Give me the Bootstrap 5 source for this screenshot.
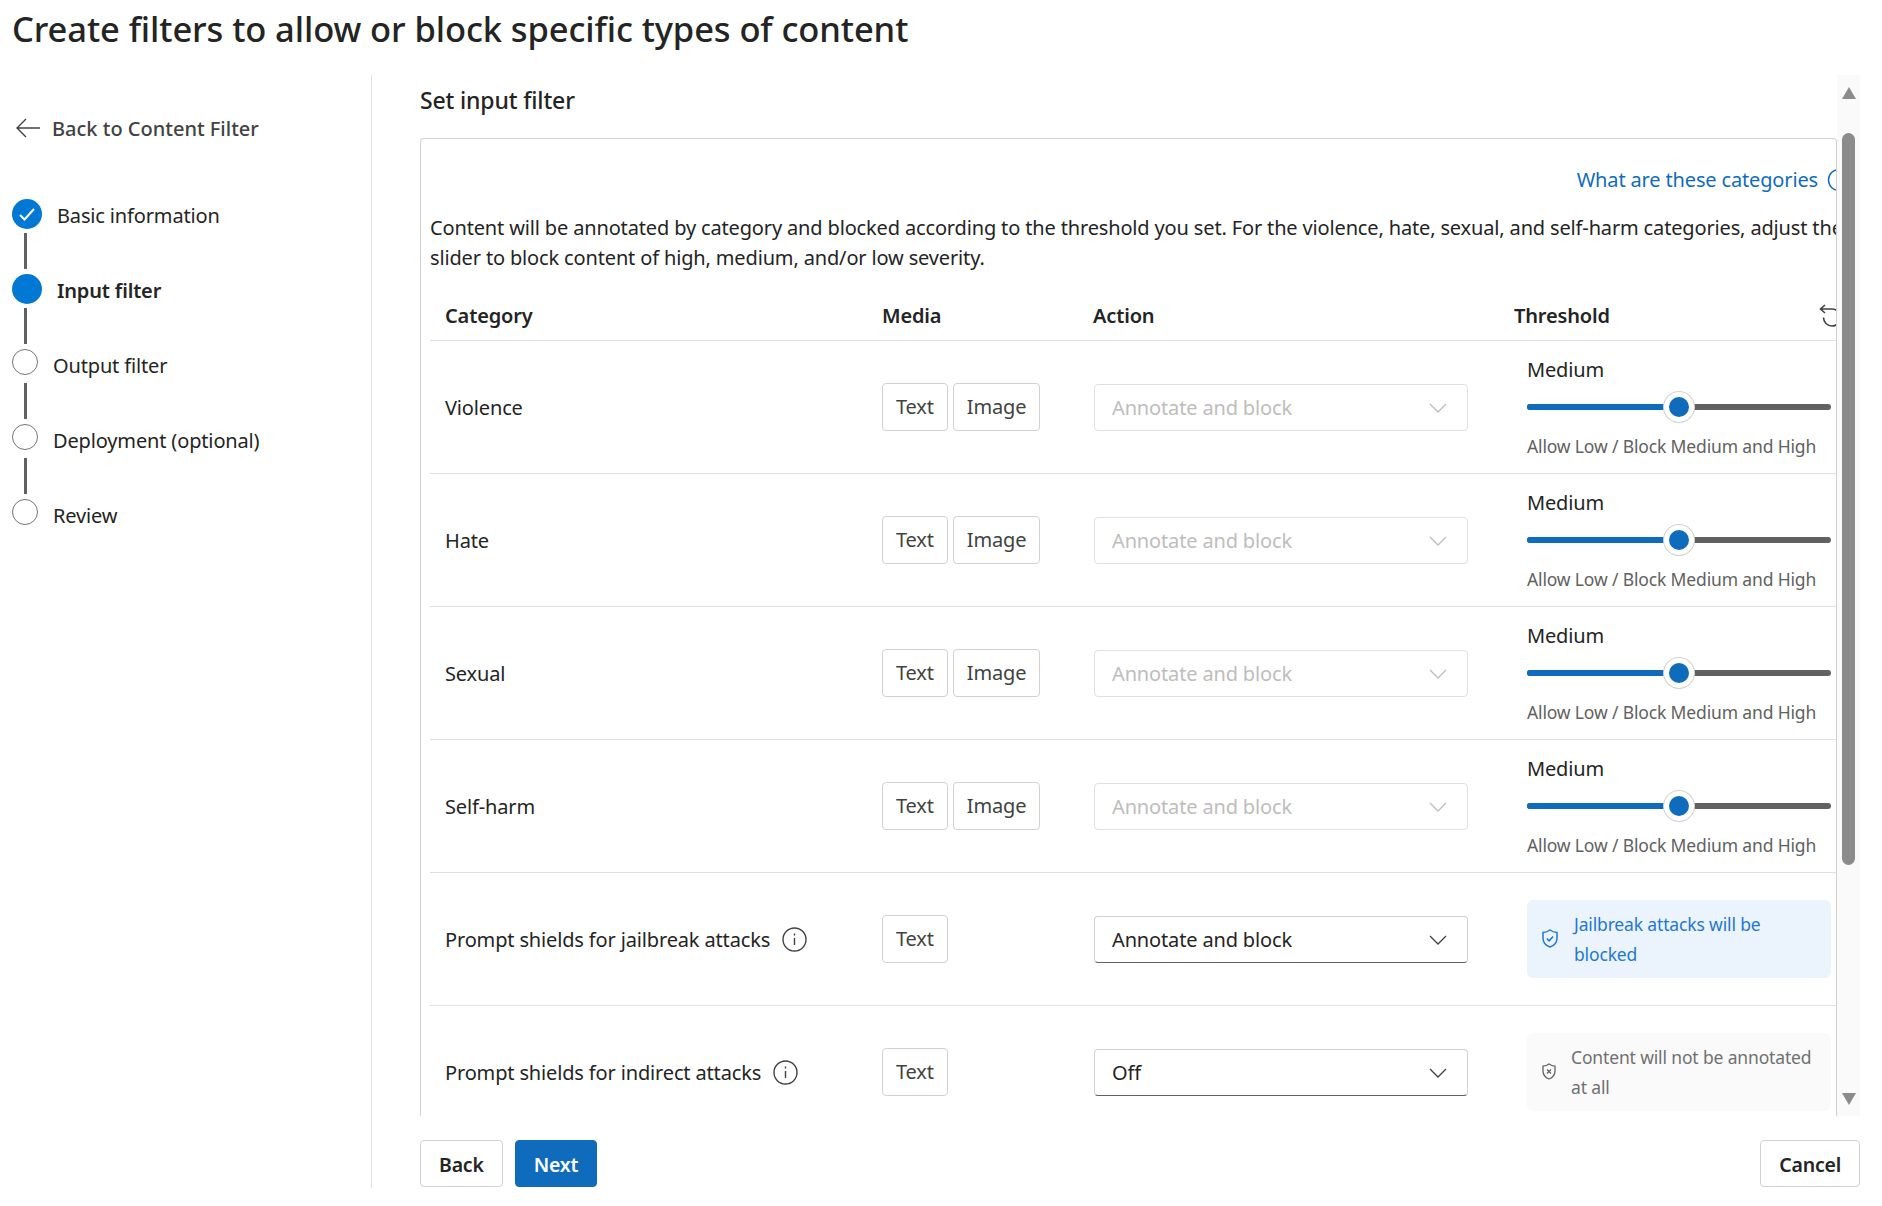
<!DOCTYPE html>
<html lang="en">
<head>
  <meta charset="UTF-8" />
  <meta name="viewport" content="width=device-width, initial-scale=1.0" />
  <title>Create filters</title>
  <link href="https://cdn.jsdelivr.net/npm/bootstrap@5.3.2/dist/css/bootstrap.min.css" rel="stylesheet" />
  <style>
    html, body { height: 100%; overflow: hidden; }
    body { font-family: "Noto Sans", "Open Sans", sans-serif; font-size: 20px; line-height: 30px; color: #242424; letter-spacing: -0.15px; background: #fff; }
    .page-title { font-size: 34.5px; font-weight: 500; line-height: 46px; margin: 6px 0 23px 12px; color: #242424; letter-spacing: -0.1px; }
    .wizard-body { height: 1113px; }
    .side-col { width: 372px; flex: none; border-right: 1px solid #e0e0e0; padding-left: 12px; }
    .back-link { margin: 38px 0 56px 4px; height: 30px; color: #424242; font-weight: 500; gap: 12px; letter-spacing: 0; }
    .back-link span { padding-top: 2px; }
    .step-row { height: 30px; gap: 15px; }
    .step-row span:last-child { padding-top: 3px; }
    .step-dot { flex: none; align-self: flex-start; width: 26px; height: 26px; border: 1px solid #757575; border-radius: 50%; }
    .step-dot.on { width: 30px; height: 30px; border: 0; background: #0078d4; }
    .step-line { width: 3px; height: 36px; margin: 4px 0 5px 12px; background: #616161; }
    .main-col { flex: 1; padding-left: 48px; padding-right: 22px; min-width: 0; }
    .scroll-area { height: 1041px; }
    .scroll-body { flex: 1; min-width: 0; }
    .set-title { font-size: 23px; font-weight: 500; margin: 10px 0 23px; }
    .filter-panel { height: 978px; border: 1px solid #d1d1d1; border-bottom: 0; border-radius: 4px 4px 0 0; padding-left: 9px; overflow: hidden; }
    .cat-link { height: 30px; margin: 26px -15px 18px 0; color: #0f6cbd; gap: 9px; }
    .filter-note { white-space: nowrap; margin: 0; height: 59px; }
    .scroll-rail { width: 23px; flex: none; background: #fafafa; }
    .rail-up, .rail-down { width: 0; height: 0; border-left: 7px solid transparent; border-right: 7px solid transparent; }
    .rail-up { border-bottom: 12px solid #8c8c8c; margin: 12px auto 0; }
    .rail-down { border-top: 12px solid #8c8c8c; margin: auto auto 11px; }
    .rail-thumb { width: 13px; height: 732px; margin: 34px auto 0; background: #8c8c8c; border-radius: 7px; }
    .filter-table { table-layout: fixed; width: 1406px; margin: 0; }
    .filter-table th, .filter-table td { padding: 0 0 0 15px; border-bottom: 1px solid #e0e0e0; vertical-align: middle; font-size: inherit; color: #242424; }
    .filter-table th { height: 68px; vertical-align: bottom; padding-bottom: 9px; font-weight: 600; }
    .filter-table td { height: 133px; }
    .filter-table td:first-child { padding-top: 2px; }
    .reset-ico { margin-right: -9px; }
    .media-tag { display: inline-block; height: 48px; line-height: 46px; padding: 0 13px; border: 1px solid #d1d1d1; border-radius: 4px; color: #424242; margin-right: 5px; }
    .act-select { width: 374px; height: 47px; margin: 2px 0 0 1px; padding: 0 20px 0 17px; border: 1px solid #d1d1d1; border-bottom-color: #616161; border-radius: 4px; }
    .act-select.off { border-color: #e0e0e0; color: #bdbdbd; }
    .act-select.off svg { stroke: #bdbdbd; }
    .act-select svg { stroke: #424242; }
    .thresh-cell { margin-left: 13px; width: 304px; padding-top: 2px; }
    .thresh-slider { position: relative; height: 30px; margin: 7px 0 9px; }
    .thresh-track { position: absolute; top: 12px; left: 0; right: 0; height: 6px; border-radius: 3px; background: #616161; }
    .thresh-fill { height: 100%; border-radius: 3px 0 0 3px; background: #0f6cbd; }
    .thresh-knob { position: absolute; top: 0; width: 30px; height: 30px; margin-left: -15px; background: #0f6cbd; border: 5px solid #fff; border-radius: 50%; box-shadow: 0 0 0 1px #d1d1d1; }
    .thresh-note { font-size: 17.5px; color: #616161; }
    .shield-note { margin-left: 13px; width: 304px; height: 78px; border-radius: 6px; padding-left: 15px; gap: 16px; font-size: 17.5px; }
    .shield-note.go { background: #ebf3fc; color: #1f78d1; }
    .shield-note.idle { background: #fafafa; color: #707070; gap: 15px; }
    .wizard-foot { margin-top: 24px; gap: 12px; }
    .foot-btn { height: 47px; padding: 3px 18px 0; font-size: 19.5px; font-weight: 600; line-height: 42px; letter-spacing: -0.2px; border: 1px solid #d1d1d1; border-radius: 4px; color: #242424; background: #fff; }
    .foot-btn.main { background: #0f6cbd; border-color: #0f6cbd; color: #fff; }
  </style>
</head>
<body>
  <h1 class="page-title">Create filters to allow or block specific types of content</h1>

  <div class="wizard-body d-flex">
    <div class="side-col">
      <div class="back-link d-flex align-items-center">
        <svg width="24" height="20" viewBox="0 0 24 20" fill="none" stroke="#424242" stroke-width="1.4"><path d="M10 1 1 10l9 9M1 10h23"/></svg>
        <span>Back to Content Filter</span>
      </div>
      <div class="step-row d-flex align-items-center">
        <span class="step-dot on d-flex align-items-center justify-content-center">
          <svg width="18" height="14" viewBox="0 0 18 14" fill="none" stroke="#fff" stroke-width="2"><path d="M2 8l4.500 4.500L16 2"/></svg>
        </span>
        <span>Basic information</span>
      </div>
      <div class="step-line"></div>
      <div class="step-row d-flex align-items-center">
        <span class="step-dot on"></span>
        <span class="fw-semibold">Input filter</span>
      </div>
      <div class="step-line"></div>
      <div class="step-row d-flex align-items-center"><span class="step-dot"></span><span>Output filter</span></div>
      <div class="step-line"></div>
      <div class="step-row d-flex align-items-center"><span class="step-dot"></span><span>Deployment (optional)</span></div>
      <div class="step-line"></div>
      <div class="step-row d-flex align-items-center"><span class="step-dot"></span><span>Review</span></div>
    </div>

    <div class="main-col">
      <div class="scroll-area d-flex">
        <div class="scroll-body">
          <div class="set-title">Set input filter</div>
          <div class="filter-panel">
            <div class="cat-link d-flex justify-content-end align-items-center">
              <span>What are these categories</span>
              <svg width="24" height="24" viewBox="0 0 24 24" fill="none" stroke="#0f6cbd" stroke-width="1.500"><circle cx="12" cy="12" r="10.500"/></svg>
            </div>
            <p class="filter-note">Content will be annotated by category and blocked according to the threshold you set. For the violence, hate, sexual, and self-harm categories, adjust the<br>slider to block content of high, medium, and/or low severity.</p>
            <table class="table filter-table">
              <colgroup><col style="width:437px"><col style="width:211px"><col style="width:421px"><col style="width:337px"></colgroup>
              <thead>
                <tr>
                  <th>Category</th>
                  <th>Media</th>
                  <th>Action</th>
                  <th>
                    <div class="d-flex justify-content-between align-items-center">
                      <span>Threshold</span>
                      <svg class="reset-ico" width="26" height="24" viewBox="0 0 26 24" fill="none" stroke="#424242" stroke-width="1.600"><path d="M6 1 1.500 5 6 9M1.500 5H13a8.500 8.500 0 1 1-8.500 8.500"/></svg>
                    </div>
                  </th>
                </tr>
              </thead>
              <tbody>
                <tr>
                  <td>Violence</td>
                  <td><span class="media-tag">Text</span><span class="media-tag">Image</span></td>
                  <td><div class="act-select off d-flex align-items-center justify-content-between"><span>Annotate and block</span><svg width="18" height="10" viewBox="0 0 18 10" fill="none" stroke-width="1.300"><path d="M1 1l8 8 8-8"/></svg></div></td>
                  <td><div class="thresh-cell"><div>Medium</div><div class="thresh-slider"><div class="thresh-track"><div class="thresh-fill" style="width:50%"></div></div><div class="thresh-knob" style="left:50%"></div></div><div class="thresh-note">Allow Low / Block Medium and High</div></div></td>
                </tr>
                <tr>
                  <td>Hate</td>
                  <td><span class="media-tag">Text</span><span class="media-tag">Image</span></td>
                  <td><div class="act-select off d-flex align-items-center justify-content-between"><span>Annotate and block</span><svg width="18" height="10" viewBox="0 0 18 10" fill="none" stroke-width="1.300"><path d="M1 1l8 8 8-8"/></svg></div></td>
                  <td><div class="thresh-cell"><div>Medium</div><div class="thresh-slider"><div class="thresh-track"><div class="thresh-fill" style="width:50%"></div></div><div class="thresh-knob" style="left:50%"></div></div><div class="thresh-note">Allow Low / Block Medium and High</div></div></td>
                </tr>
                <tr>
                  <td>Sexual</td>
                  <td><span class="media-tag">Text</span><span class="media-tag">Image</span></td>
                  <td><div class="act-select off d-flex align-items-center justify-content-between"><span>Annotate and block</span><svg width="18" height="10" viewBox="0 0 18 10" fill="none" stroke-width="1.300"><path d="M1 1l8 8 8-8"/></svg></div></td>
                  <td><div class="thresh-cell"><div>Medium</div><div class="thresh-slider"><div class="thresh-track"><div class="thresh-fill" style="width:50%"></div></div><div class="thresh-knob" style="left:50%"></div></div><div class="thresh-note">Allow Low / Block Medium and High</div></div></td>
                </tr>
                <tr>
                  <td>Self-harm</td>
                  <td><span class="media-tag">Text</span><span class="media-tag">Image</span></td>
                  <td><div class="act-select off d-flex align-items-center justify-content-between"><span>Annotate and block</span><svg width="18" height="10" viewBox="0 0 18 10" fill="none" stroke-width="1.300"><path d="M1 1l8 8 8-8"/></svg></div></td>
                  <td><div class="thresh-cell"><div>Medium</div><div class="thresh-slider"><div class="thresh-track"><div class="thresh-fill" style="width:50%"></div></div><div class="thresh-knob" style="left:50%"></div></div><div class="thresh-note">Allow Low / Block Medium and High</div></div></td>
                </tr>
                <tr>
                  <td><div class="d-flex align-items-center gap-2"><span>Prompt shields for jailbreak attacks</span><svg class="ms-1" width="25" height="25" viewBox="0 0 25 25" fill="none" stroke="#424242" stroke-width="1.400"><circle cx="12.500" cy="12.500" r="11.500"/><path d="M12.500 11v7M12.500 6.500v2"/></svg></div></td>
                  <td><span class="media-tag">Text</span></td>
                  <td><div class="act-select d-flex align-items-center justify-content-between"><span>Annotate and block</span><svg width="18" height="10" viewBox="0 0 18 10" fill="none" stroke-width="1.300"><path d="M1 1l8 8 8-8"/></svg></div></td>
                  <td><div class="shield-note go d-flex align-items-center"><svg width="16" height="19" viewBox="0 0 16 19" fill="none" stroke="#1f78d1" stroke-width="1.500"><path d="M8 1c2 1.500 4 2.300 7 2.500V9c0 4.500-2.500 7.500-7 9-4.500-1.500-7-4.500-7-9V3.500C4 3.300 6 2.500 8 1z"/><path d="M4.800 9.500l2.300 2.300 4-4.300"/></svg><span>Jailbreak attacks will be<br>blocked</span></div></td>
                </tr>
                <tr>
                  <td><div class="d-flex align-items-center gap-2"><span>Prompt shields for indirect attacks</span><svg class="ms-1" width="25" height="25" viewBox="0 0 25 25" fill="none" stroke="#424242" stroke-width="1.400"><circle cx="12.500" cy="12.500" r="11.500"/><path d="M12.500 11v7M12.500 6.500v2"/></svg></div></td>
                  <td><span class="media-tag">Text</span></td>
                  <td><div class="act-select d-flex align-items-center justify-content-between"><span>Off</span><svg width="18" height="10" viewBox="0 0 18 10" fill="none" stroke-width="1.300"><path d="M1 1l8 8 8-8"/></svg></div></td>
                  <td><div class="shield-note idle d-flex align-items-center"><svg width="14" height="17" viewBox="0 0 14 17" fill="none" stroke="#616161" stroke-width="1.300"><path d="M7 1c1.800 1.300 3.500 2 6 2.200V8c0 4-2 6.500-6 8-4-1.500-6-4-6-8V3.200C3.500 3 5.200 2.300 7 1z"/><path d="M5 6.500l4 4M9 6.500l-4 4"/></svg><span>Content will not be annotated<br>at all</span></div></td>
                </tr>
              </tbody>
            </table>
          </div>
        </div>
        <div class="scroll-rail d-flex flex-column">
          <div class="rail-up"></div>
          <div class="rail-thumb"></div>
          <div class="rail-down"></div>
        </div>
      </div>
      <div class="wizard-foot d-flex">
        <button class="btn foot-btn">Back</button>
        <button class="btn foot-btn main">Next</button>
        <button class="btn foot-btn ms-auto">Cancel</button>
      </div>
    </div>
  </div>

  <script src="https://cdn.jsdelivr.net/npm/bootstrap@5.3.2/dist/js/bootstrap.bundle.min.js"></script>
</body>
</html>
